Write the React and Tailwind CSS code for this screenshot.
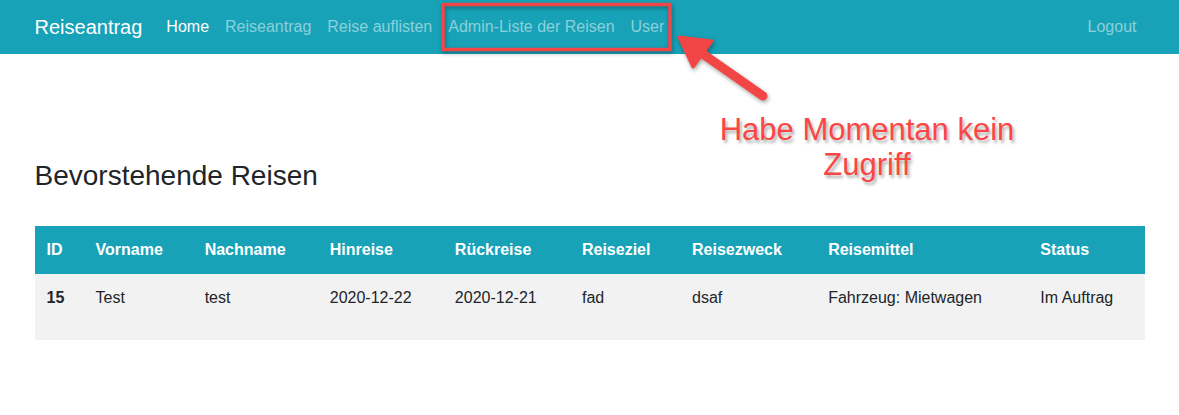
import React from "react";

const navLinks = [
  { label: "Home", active: true },
  { label: "Reiseantrag" },
  { label: "Reise auflisten" },
  { label: "Admin-Liste der Reisen" },
  { label: "User" },
];

const columns = [
  { label: "ID", w: "w-[49px]" },
  { label: "Vorname", w: "w-[109px]" },
  { label: "Nachname", w: "w-[125px]" },
  { label: "Hinreise", w: "w-[125px]" },
  { label: "Rückreise", w: "w-[127px]" },
  { label: "Reiseziel", w: "w-[110px]" },
  { label: "Reisezweck", w: "w-[136px]" },
  { label: "Reisemittel", w: "w-[212px]" },
  { label: "Status", w: "w-[116px]" },
];

const trips = [
  {
    id: 15,
    vorname: "Test",
    nachname: "test",
    hin: "2020-12-22",
    rueck: "2020-12-21",
    ziel: "fad",
    zweck: "dsaf",
    mittel: "Fahrzeug: Mietwagen",
    status: "Im Auftrag",
  },
];

export default function App() {
  return (
    <div className="relative min-h-[415px] bg-white text-[#212529] font-['Liberation_Sans',Arial,sans-serif] text-base">
      {/* navbar */}
      <nav className="bg-[#17a2b8] h-[54px]">
        <div className="max-w-[1140px] mx-auto px-[15px] h-full flex items-center">
          <span className="text-white text-[20px] mr-[16px]">Reiseantrag</span>
          <ul className="flex">
            {navLinks.map((l) => (
              <li key={l.label}>
                <a
                  href="#"
                  className={
                    "px-2 leading-6 " +
                    (l.active ? "text-white" : "text-white/50")
                  }
                >
                  {l.label}
                </a>
              </li>
            ))}
          </ul>
          <a href="#" className="ml-auto px-2 text-white/50">
            Logout
          </a>
        </div>
      </nav>

      <main className="max-w-[1140px] mx-auto px-[15px]">
        <h3 className="mt-[105px] text-[28px] leading-[1.2]">Bevorstehende Reisen</h3>
        <table className="mt-[33px] w-full border-collapse text-left">
          <thead>
            <tr className="bg-[#17a2b8] text-white">
              {columns.map((c) => (
                <th key={c.label} className={"px-3 py-3 leading-6 font-bold " + c.w}>
                  {c.label}
                </th>
              ))}
            </tr>
          </thead>
          <tbody>
            {trips.map((t) => (
              <tr key={t.id} className="bg-[#f2f2f2] h-[66px] align-top">
                <td className="px-3 py-3 leading-6 font-bold">{t.id}</td>
                <td className="px-3 py-3 leading-6">{t.vorname}</td>
                <td className="px-3 py-3 leading-6">{t.nachname}</td>
                <td className="px-3 py-3 leading-6">{t.hin}</td>
                <td className="px-3 py-3 leading-6">{t.rueck}</td>
                <td className="px-3 py-3 leading-6">{t.ziel}</td>
                <td className="px-3 py-3 leading-6">{t.zweck}</td>
                <td className="px-3 py-3 leading-6">{t.mittel}</td>
                <td className="px-3 py-3 leading-6">{t.status}</td>
              </tr>
            ))}
          </tbody>
        </table>
      </main>

      {/* screenshot annotation */}
      <svg
        className="absolute left-0 top-0 pointer-events-none"
        width="1179"
        height="415"
        style={{ filter: "drop-shadow(1px 2px 2px rgba(0,0,0,0.35))" }}
      >
        <rect x="443" y="4.5" width="227" height="45" fill="none" stroke="#f24646" strokeWidth="3.5" />
        <line x1="763" y1="96" x2="700" y2="52" stroke="#f24646" strokeWidth="9" strokeLinecap="round" />
        <polygon points="679,37 712,41 693,67" fill="#f24646" stroke="#f24646" strokeWidth="3" strokeLinejoin="round" />
      </svg>
      <div className="absolute left-[667px] top-[112px] w-[400px] text-center text-[31px] leading-[35px] text-[#fb4646] [text-shadow:2px_3px_3px_rgba(0,0,0,0.3)]">
        Habe Momentan kein
        <br />
        Zugriff
      </div>
    </div>
  );
}
